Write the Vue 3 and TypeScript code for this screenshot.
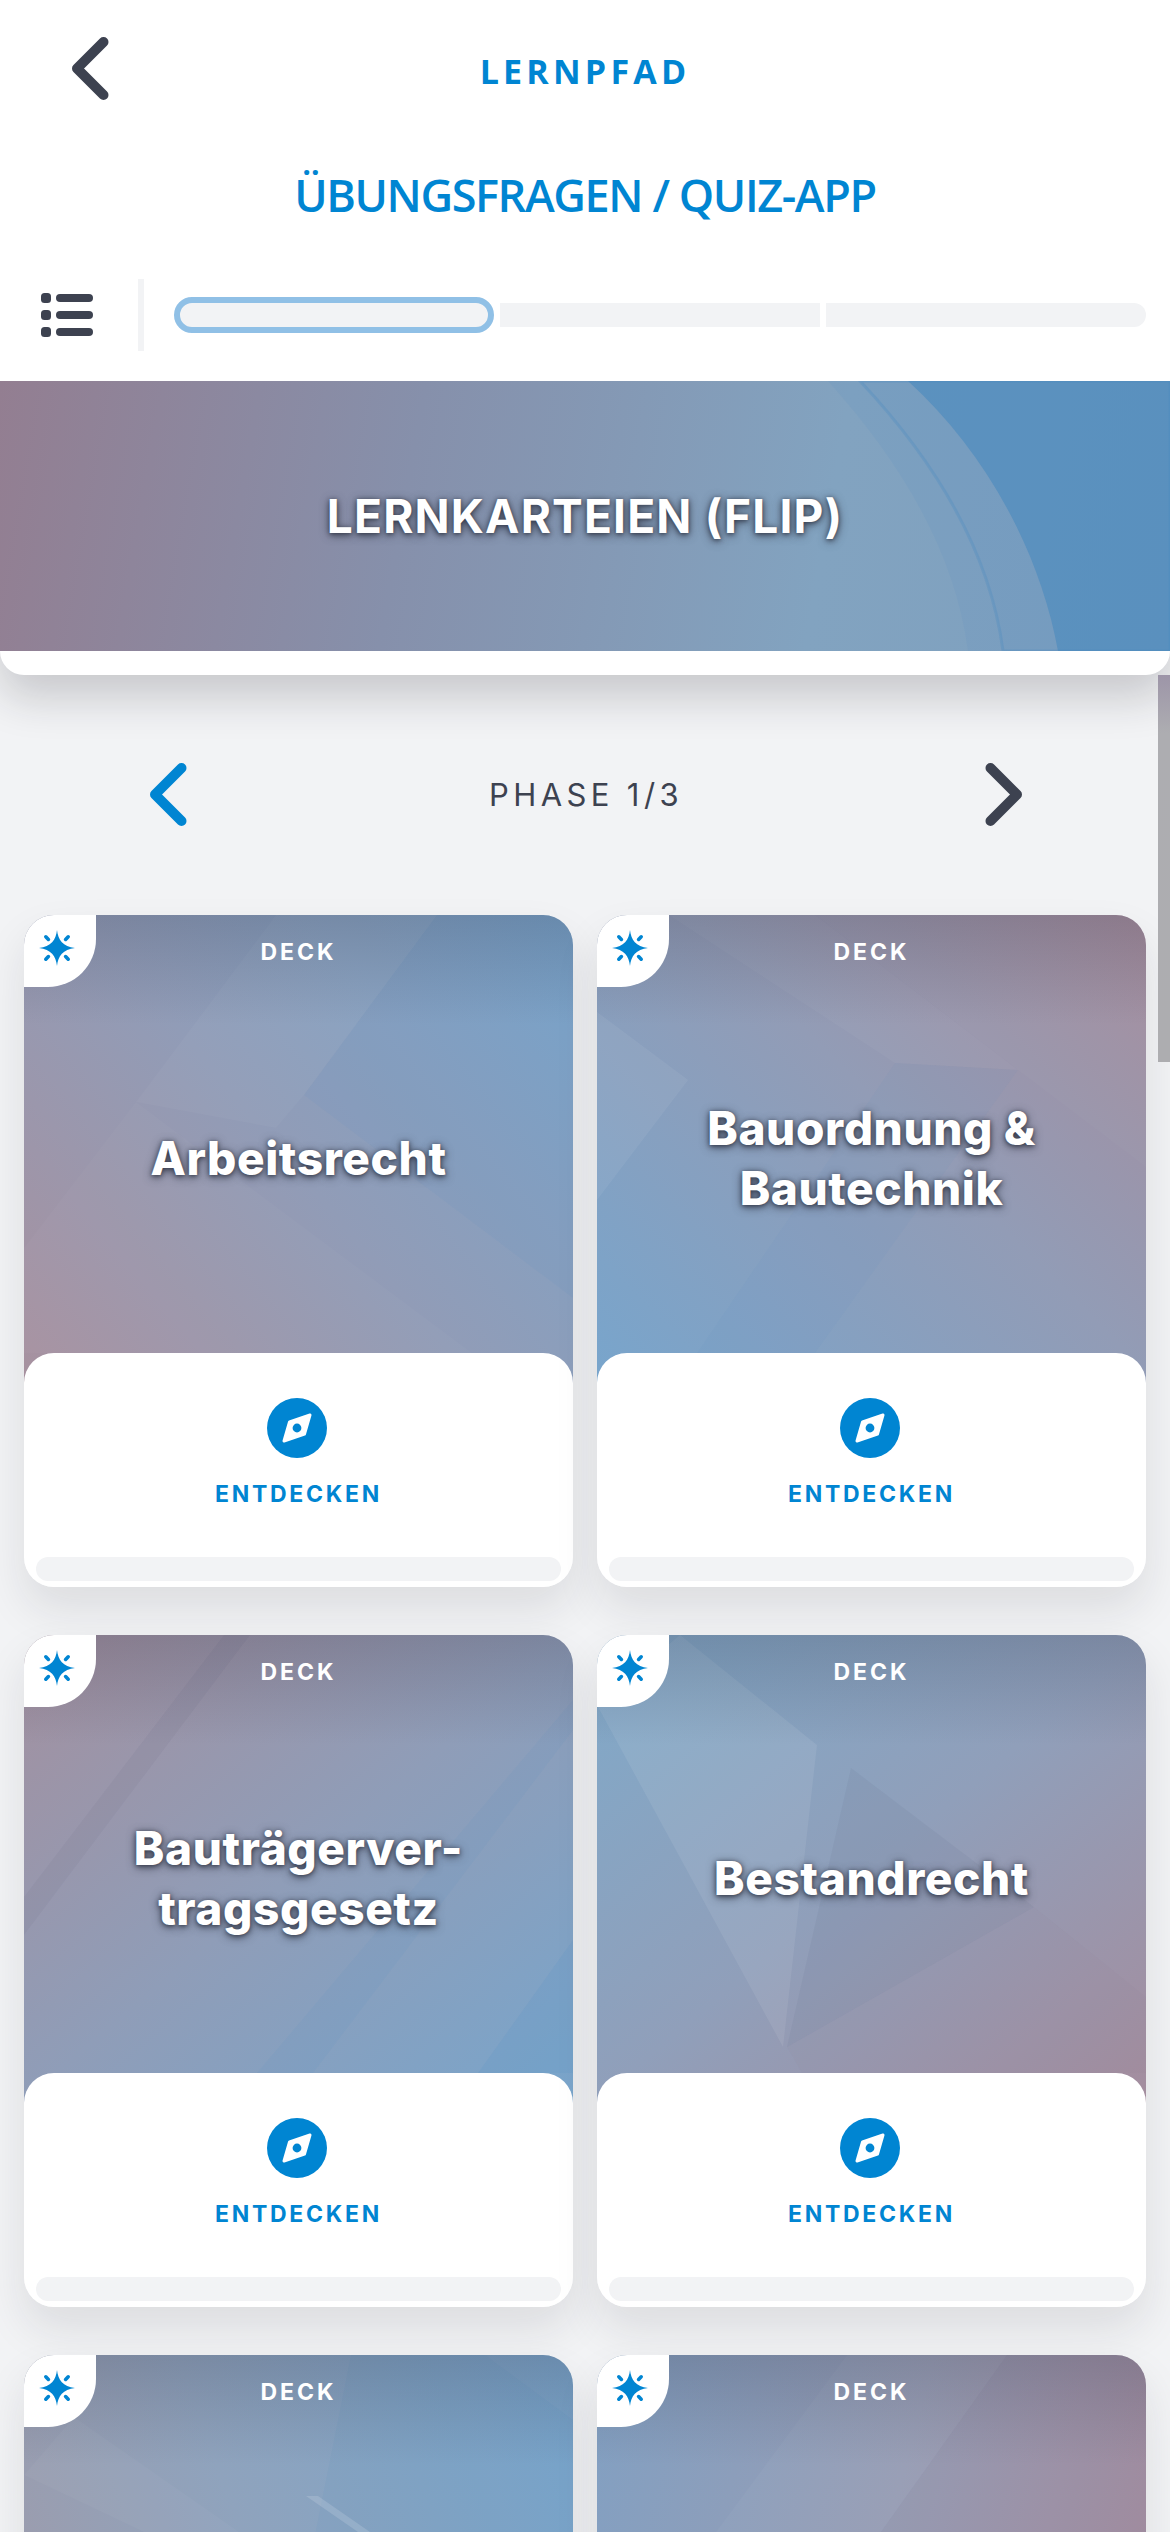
<template>
  <div class="page">
    <header class="top">
      <div class="top-row">
        <button type="button" class="icon-btn back" aria-label="Zurück">
          <svg width="37" height="63" viewBox="0 0 37 63"><path d="M31.5 5 5 31.5 31.5 58" /></svg>
        </button>
        <span class="crumb">LERNPFAD</span>
      </div>
      <h1 class="title">ÜBUNGSFRAGEN / QUIZ-APP</h1>
      <div class="steps">
        <div class="list-icon">
          <span v-for="n in 3" :key="n" class="list-row"><i></i><b></b></span>
        </div>
        <div class="steps-track">
          <span class="step current"></span>
          <span class="step"></span>
          <span class="step last"></span>
        </div>
      </div>
      <div class="banner">
        <svg class="art" viewBox="0 0 1170 270" preserveAspectRatio="none">
          <path d="M828 0C900 80 955 170 968 270H1170V0Z" fill="#4f8cc0" fill-opacity=".1" />
          <path d="M860 0C935 80 990 170 1003 270H1170V0Z" fill="#4f8cc0" fill-opacity=".08" stroke="#4f8cc0" stroke-opacity=".35" stroke-width="3" />
          <path d="M908 0C985 70 1040 170 1058 270H1170V0Z" fill="#3f85bd" fill-opacity=".5" />
        </svg>
        <h2 class="banner-title">LERNKARTEIEN (FLIP)</h2>
      </div>
      <div class="banner-foot"></div>
    </header>

    <nav class="phase">
      <svg class="chev blue" width="37" height="63" viewBox="0 0 37 63"><path d="M31.5 5 5 31.5 31.5 58" /></svg>
      <span class="phase-label">PHASE 1/3</span>
      <svg class="chev" width="37" height="63" viewBox="0 0 37 63"><path d="M5.5 5 32 31.5 5.5 58" /></svg>
    </nav>

    <section class="grid">
      <article v-for="(deck, d) in decks" :key="d" class="card">
        <div class="cover" :style="{ background: deck.bg }">
          <svg class="art" viewBox="0 0 549 468" preserveAspectRatio="none">
            <polygon
              v-for="(s, i) in deck.shapes"
              :key="i"
              :points="s.p"
              :fill="s.f"
              :fill-opacity="s.o"
            />
          </svg>
          <div class="shade"></div>
          <div class="corner">
            <svg width="36" height="36" viewBox="0 0 36 36">
              <path class="star" d="M18 0C19 10 24 16.5 36 18 24 19.5 19 26 18 36 17 26 12 19.5 0 18 12 16.5 17 10 18 0Z" />
              <path class="ticks" d="M6.8 6.8l2.6 2.6M29.2 6.8l-2.6 2.6M6.8 29.2l2.6-2.6M29.2 29.2l-2.6-2.6" />
            </svg>
          </div>
          <span class="deck-label">DECK</span>
          <h3 v-if="deck.name" class="deck-name">{{ deck.name }}</h3>
        </div>
        <!-- last row runs off the screen, its titles and panels are never seen -->
        <div v-if="deck.name" class="panel">
          <svg class="compass" width="60" height="60" viewBox="0 0 60 60">
            <circle cx="30" cy="30" r="30" fill="#0085d2" />
            <path d="M43 17 37.5 36 17 43 22.5 24Z" fill="#fff" stroke="#fff" stroke-width="3" stroke-linejoin="round" />
            <circle cx="30" cy="30" r="4.4" fill="#0085d2" />
          </svg>
          <span class="explore">ENTDECKEN</span>
          <div class="bar"></div>
        </div>
      </article>
    </section>

    <div class="scrollbar"></div>
  </div>
</template>

<script setup lang="ts">
interface Shape {
  p: string
  f: string
  o: number
}

interface Deck {
  name: string
  bg: string
  shapes: Shape[]
}

const decks: Deck[] = [
  {
    name: 'Arbeitsrecht',
    bg: 'linear-gradient(50deg, #a7919f 0%, #919cb7 48%, #7ba5ca 100%)',
    shapes: [
      { p: '413,0 549,0 549,383 280,180', f: '#4b8fc4', o: 0.06 },
      { p: '252,0 413,0 280,180 252,213 112,187', f: '#fff', o: 0.03 },
      { p: '112,187 448,438 0,438 0,333', f: '#fff', o: 0.025 }
    ]
  },
  {
    name: 'Bauordnung & Bautechnik',
    bg: 'linear-gradient(225deg, #a58c9d 0%, #929cb6 45%, #78a5cc 100%)',
    shapes: [
      { p: '0,97 91,165 0,285', f: '#fff', o: 0.06 },
      { p: '72,0 218,0 421,155 298,148', f: '#fff', o: 0.035 },
      { p: '298,148 421,155 218,438 100,438', f: '#4b8fc4', o: 0.05 },
      { p: '218,0 549,0 549,252 421,155', f: '#fff', o: 0.02 }
    ]
  },
  {
    name: 'Bauträgerver-tragsgesetz',
    bg: 'linear-gradient(140deg, #a3909f 0%, #8f9db8 50%, #79a5cb 100%)',
    shapes: [
      { p: '200,0 226,0 0,300 0,262', f: '#4a4a60', o: 0.06 },
      { p: '549,65 549,95 289,438 233,438', f: '#4b8fc4', o: 0.07 },
      { p: '549,305 549,438 454,438', f: '#4b8fc4', o: 0.12 }
    ]
  },
  {
    name: 'Bestandrecht',
    bg: 'linear-gradient(140deg, #80a9c9 0%, #909fba 50%, #a48d9e 100%)',
    shapes: [
      { p: '83,0 220,110 186,412 0,70', f: '#fff', o: 0.08 },
      { p: '254,133 437,272 190,412', f: '#46566f', o: 0.07 },
      { p: '190,412 437,272 549,362 549,438 205,438', f: '#8a6f8f', o: 0.05 }
    ]
  },
  {
    name: '',
    bg: 'linear-gradient(70deg, #a09aa8 0%, #8fa3bd 45%, #79a5cb 100%)',
    shapes: [
      { p: '327,0 461,0 549,65 549,300 267,300', f: '#4b8fc4', o: 0.08 },
      { p: '50,62 215,177 120,177 0,120', f: '#fff', o: 0.03 },
      { p: '282,141 294,141 346,177 334,177', f: '#fff', o: 0.14 }
    ]
  },
  {
    name: '',
    bg: 'linear-gradient(285deg, #a5899b 0%, #969cb4 50%, #82a0c2 100%)',
    shapes: [
      { p: '250,0 410,0 284,177 119,177', f: '#fff', o: 0.03 },
      { p: '410,0 549,0 549,177 284,177', f: '#8a6f8f', o: 0.05 }
    ]
  }
]
</script>

<style>
html,
body {
  margin: 0;
  background: #f2f3f5;
}
</style>

<style scoped>
.page {
  position: relative;
  width: 1170px;
  height: 2532px;
  overflow: hidden;
  background: #f2f3f5;
  font-family: Inter, "Liberation Sans", sans-serif;
  color: #3d4250;
}

/* Header */
.top {
  position: relative;
  z-index: 2;
  background: #fff;
  border-radius: 0 0 24px 24px;
  box-shadow: 0 22px 44px rgba(30, 30, 40, 0.2);
}

.top-row {
  position: relative;
  height: 137px;
  display: flex;
  justify-content: center;
  padding-top: 53px;
  box-sizing: border-box;
}

.icon-btn {
  position: absolute;
  left: 72px;
  top: 37px;
  padding: 0;
  border: 0;
  background: none;
  line-height: 0;
}

.back path,
.chev path {
  fill: none;
  stroke: #3d4250;
  stroke-width: 10;
  stroke-linecap: round;
  stroke-linejoin: round;
}

.crumb {
  font-family: "Open Sans", sans-serif;
  font-size: 34px;
  line-height: 36px;
  font-weight: 700;
  letter-spacing: 4.2px;
  color: #0085d2;
}

.title {
  margin: 0;
  height: 60px;
  margin-top: 28px;
  text-align: center;
  font-family: "Open Sans", sans-serif;
  font-size: 45px;
  line-height: 60px;
  font-weight: 600;
  letter-spacing: -1.4px;
  color: #0085d2;
}

.steps {
  display: flex;
  align-items: center;
  height: 72px;
  margin-top: 54px;
  padding: 0 24px 0 41px;
}

.list-icon {
  display: flex;
  flex-direction: column;
  gap: 7px;
  width: 52px;
  margin-right: 45px;
}

.list-row {
  display: flex;
  align-items: center;
  gap: 5px;
  height: 10px;
}

.list-row i {
  width: 10px;
  height: 10px;
  border-radius: 3.5px;
  background: #3d4250;
}

.list-row b {
  flex: 1;
  height: 8px;
  border-radius: 4px;
  background: #3d4250;
}

.steps-track {
  flex: 1;
  display: grid;
  grid-template-columns: repeat(3, 1fr);
  align-items: center;
  gap: 6px;
  height: 72px;
  padding-left: 30px;
  border-left: 6px solid #f2f3f5;
}

.step {
  height: 24px;
  background: #f2f3f5;
}

.step.current {
  height: 36px;
  box-sizing: border-box;
  border: 6px solid #90c0e6;
  border-radius: 18px;
}

.step.last {
  border-radius: 0 12px 12px 0;
}

.banner {
  position: relative;
  height: 270px;
  margin-top: 30px;
  display: flex;
  align-items: center;
  justify-content: center;
  background: linear-gradient(100deg, #937e91 0%, #8690ab 35%, #82a3c0 70%, #7da0bf 100%);
  overflow: hidden;
}

.banner-title {
  position: relative;
  margin: 0;
  font-size: 46px;
  line-height: 60px;
  font-weight: 700;
  letter-spacing: 1.2px;
  color: #fff;
  text-shadow: 0 1px 4px rgba(45, 50, 65, 0.8), 0 2px 10px rgba(45, 50, 65, 0.8);
}

.banner-foot {
  height: 24px;
}

.art {
  position: absolute;
  inset: 0;
  width: 100%;
  height: 100%;
}

/* Phase switcher */
.phase {
  display: flex;
  align-items: center;
  justify-content: space-between;
  height: 63px;
  margin-top: 88px;
  padding: 0 148px 0 150px;
}

.chev.blue path {
  stroke: #0085d2;
}

.phase-label {
  font-size: 31px;
  font-weight: 400;
  letter-spacing: 4.4px;
}

/* Deck grid */
.grid {
  display: grid;
  grid-template-columns: 1fr 1fr;
  gap: 48px 24px;
  margin-top: 89px;
  padding: 0 24px;
}

.card {
  position: relative;
  height: 672px;
  border-radius: 30px;
  box-shadow: 0 22px 44px rgba(30, 30, 40, 0.1);
}

.cover {
  position: relative;
  height: 468px;
  box-sizing: border-box;
  padding: 48px 24px 30px;
  display: flex;
  align-items: center;
  justify-content: center;
  border-radius: 30px 30px 0 0;
  overflow: hidden;
}

.shade {
  position: absolute;
  inset: 0 0 auto;
  height: 110px;
  background: linear-gradient(rgba(50, 50, 70, 0.22), rgba(50, 50, 70, 0));
}

.corner {
  position: absolute;
  top: 0;
  left: 0;
  width: 72px;
  height: 72px;
  display: flex;
  align-items: center;
  justify-content: center;
  padding: 0 6px 6px 0;
  box-sizing: border-box;
  background: #fff;
  border-radius: 0 0 48px 0;
}

.star {
  fill: #0085d2;
}

.ticks {
  fill: none;
  stroke: #0085d2;
  stroke-width: 3.6;
  stroke-linecap: round;
}

.deck-label {
  position: absolute;
  top: 22px;
  left: 0;
  right: 0;
  text-align: center;
  font-size: 23px;
  line-height: 30px;
  font-weight: 700;
  letter-spacing: 3px;
  color: #fff;
}

.deck-name {
  position: relative;
  margin: 0;
  text-align: center;
  font-size: 46px;
  line-height: 60px;
  font-weight: 800;
  letter-spacing: 0.6px;
  color: #fff;
  text-shadow: 0 1px 4px rgba(45, 50, 65, 0.8), 0 2px 10px rgba(45, 50, 65, 0.8);
}

.panel {
  position: relative;
  height: 234px;
  margin-top: -30px;
  box-sizing: border-box;
  padding: 45px 12px 6px;
  display: flex;
  flex-direction: column;
  align-items: center;
  background: #fff;
  border-radius: 30px;
}

.compass {
  margin-left: -3px;
}

.explore {
  margin-top: 24px;
  font-size: 23px;
  line-height: 24px;
  font-weight: 700;
  letter-spacing: 2.7px;
  color: #0085d2;
}

.bar {
  width: 100%;
  height: 24px;
  margin-top: auto;
  border-radius: 12px;
  background: #f2f3f5;
}

.scrollbar {
  position: absolute;
  top: 675px;
  right: 0;
  z-index: 3;
  width: 12px;
  height: 387px;
  background: linear-gradient(#9d95a8, #adadb1 15%, #adadb0);
}
</style>
